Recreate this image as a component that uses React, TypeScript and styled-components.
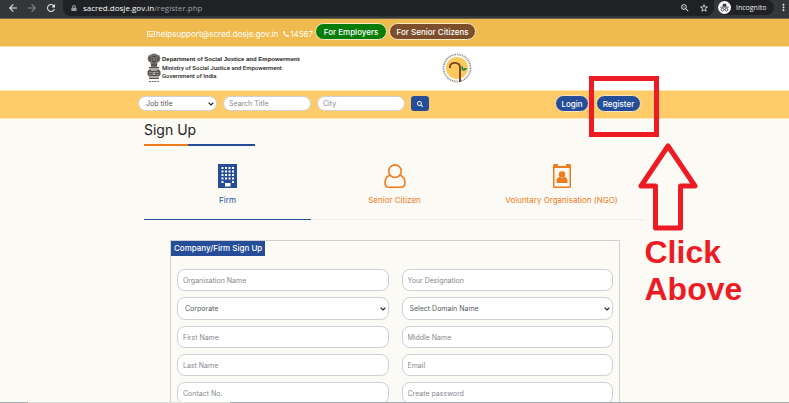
import React from "react";
import styled, { createGlobalStyle } from "styled-components";
import { FaPhoneAlt, FaRegEnvelope, FaSearch, FaLock } from "react-icons/fa";
import { MdArrowBack, MdArrowForward, MdRefresh, MdStarBorder, MdZoomOut, MdMoreVert } from "react-icons/md";

const uiFont = `Inter, "Open Sans", sans-serif`;
const blue = "#264d98";
const orange = "#ee7b1c";
const red = "#ed1c24";

const GlobalStyle = createGlobalStyle`
  *, *::before, *::after { box-sizing: border-box; }
  body { margin: 0; background: #fcfaf5; font-family: ${uiFont}; overflow: hidden; }
  button, input, select { font: inherit; }
  h1, h2, p, fieldset, legend { margin: 0; padding: 0; }
`;

const Screen = styled.div`
  position: relative;
  display: flex;
  flex-direction: column;
  height: 100vh;
  overflow: hidden;
`;

/* Browser chrome */

const BrowserBar = styled.header`
  flex: none;
  display: flex;
  align-items: center;
  gap: 4px;
  height: 19px;
  padding: 0 0 3px 7px;
  background: #35363a;
  border-bottom: 1px solid #6d6550;
  color: #9aa0a6;
  font-family: "Open Sans", sans-serif;
  font-size: 8px;
`;

const IconButton = styled.button<{ $color?: string }>`
  display: flex;
  padding: 0;
  border: 0;
  background: none;
  color: ${(p) => p.$color ?? "#e8eaed"};
`;

const History = styled.nav`
  display: flex;
  gap: 7px;
  width: 52px;
`;

const AddressBar = styled.div`
  flex: 1;
  display: flex;
  align-items: center;
  gap: 6px;
  height: 16px;
  padding: 0 5px 0 8px;
  border-radius: 0 0 8px 8px;
  background: #202124;
`;

const Tools = styled.div`
  display: flex;
  gap: 9px;
`;

const Url = styled.span`
  flex: 1;
  b { font-weight: 400; color: #fff; }
`;

const Incognito = styled.div`
  display: flex;
  align-items: center;
  gap: 5px;
  width: 56px;
  height: 15px;
  border-radius: 8px;
  background: #202124;
  color: #e8eaed;
  font-size: 7px;
`;

/* Site header */

const Band = styled.div<{ $tone: string; $height: number; $edge?: string }>`
  flex: none;
  height: ${(p) => p.$height}px;
  background: ${(p) => p.$tone};
  border-bottom: 1px solid ${(p) => p.$edge ?? p.$tone};
`;

const Container = styled.div`
  width: 100%;
  max-width: 501px;
  margin: 0 auto;
`;

const ContactRow = styled(Container)`
  display: flex;
  align-items: center;
  height: 100%;
  gap: 2px;
  padding: 0 3px 2px;
`;

const ContactLink = styled.a<{ $spaced?: boolean }>`
  display: flex;
  align-items: center;
  gap: 1px;
  margin: 4px ${(p) => (p.$spaced ? 3 : 0)}px 0 0;
  color: #fff;
  font-size: 8px;
  font-weight: 400;
  text-decoration: none;
  white-space: nowrap;
`;

const Pill = styled.a<{ $tone: string; $width: number }>`
  display: flex;
  align-items: center;
  justify-content: center;
  width: ${(p) => p.$width}px;
  height: 17px;
  border: 1px solid #fbe7bd;
  border-radius: 9px;
  background: ${(p) => p.$tone};
  color: #fff;
  font-size: 8px;
  font-weight: 500;
  text-decoration: none;
  white-space: nowrap;
`;

const BrandRow = styled(Container)`
  display: grid;
  grid-template-columns: 14px 279px auto 1fr;
  align-items: center;
  gap: 1px;
  height: 100%;
  padding: 0 3px 2px;
`;

const Department = styled.div`
  color: #222;
  font-family: Roboto, sans-serif;
  font-size: 6px;
  font-weight: 500;
  line-height: 8px;
  h2 {
    font-family: "Liberation Sans", Arial, sans-serif;
    font-size: 6px;
    line-height: 9px;
  }
`;

const SearchRow = styled(Container)`
  display: flex;
  align-items: center;
  height: 100%;
  padding: 0 4px 2px 0;
`;

const SearchForm = styled.form`
  flex: 1;
  display: flex;
  align-items: center;
  gap: 6px;
  margin-left: -6px;
`;

const Field = styled.input<{ $compact?: boolean }>`
  width: ${(p) => (p.$compact ? "88px" : "100%")};
  height: ${(p) => (p.$compact ? 15 : 22)}px;
  padding: 0 5px;
  border: 1px solid #ced0d2;
  border-radius: 8px;
  background: #fff;
  color: #495057;
  font-size: 7px;
  outline: 0;
  &::placeholder { color: #85898e; opacity: 1; }
`;

const SelectBox = styled.div<{ $compact?: boolean }>`
  display: grid;
  align-items: center;
  width: ${(p) => (p.$compact ? "79px" : "100%")};
  > * { grid-area: 1 / 1; }
  svg { justify-self: end; margin-right: 3px; pointer-events: none; }
`;

const Select = styled.select<{ $compact?: boolean }>`
  appearance: none;
  width: 100%;
  height: ${(p) => (p.$compact ? 15 : 23)}px;
  padding: 0 7px;
  border: 1px solid #ced0d2;
  border-radius: 8px;
  background: #fff;
  color: #555a60;
  font-size: 7px;
`;

const SearchButton = styled.button`
  display: flex;
  align-items: center;
  justify-content: center;
  width: 18px;
  height: 15px;
  padding: 0;
  border: 0;
  border-radius: 3px;
  background: ${blue};
  color: #fff;
`;

const Account = styled.nav`
  display: flex;
  gap: 7px;
`;

/* Sign-up content */

const Main = styled.main`
  flex: 1;
  min-height: 0;
  overflow: hidden;
`;

const Title = styled.h1`
  width: 111px;
  height: 27px;
  padding-top: 2px;
  border-bottom: 2px solid;
  border-image: linear-gradient(to right, ${orange} 40%, ${blue} 40%) 1;
  color: #222;
  font-size: 14px;
  font-weight: 400;
  line-height: 18px;
`;

const Tabs = styled.div`
  display: grid;
  grid-template-columns: repeat(3, 1fr);
`;

const Tab = styled.button<{ $active?: boolean }>`
  display: flex;
  flex-direction: column;
  align-items: center;
  gap: 5px;
  height: 74px;
  padding: 18px 0 0;
  border: 0;
  border-bottom: 1px solid ${(p) => (p.$active ? blue : "#eeeeec")};
  background: none;
  color: ${(p) => (p.$active ? blue : orange)};
  font-size: 8px;
  line-height: 14px;
`;

const Panel = styled.fieldset`
  min-width: 0;
  margin: 20px 25px 0 26px;
  border: 1px solid #d0d0d0;
`;

const PanelTitle = styled.legend`
  float: left;
  height: 15px;
  padding: 0 3px;
  background: ${blue};
  color: #fff;
  font-size: 8px;
  font-weight: 500;
  line-height: 15px;
`;

const Fields = styled.div`
  clear: both;
  display: grid;
  grid-template-columns: 1fr 1fr;
  gap: 6px 13px;
  padding: 13px 6px;
`;

const ScreenEdge = styled.div`
  flex: none;
  height: 1px;
  background: linear-gradient(to right, #a7aeb2 28px, #dcdcd8 28px 230px, #a9adb0 230px);
`;

/* Annotations laid over the page */

const Highlight = styled.div`
  position: absolute;
  top: 76px;
  left: calc(50% + 194px);
  width: 70px;
  height: 61px;
  border: 5px solid ${red};
`;

const Callout = styled.div`
  position: absolute;
  top: 142px;
  left: calc(50% + 243px);
  color: ${red};
  font: 700 32px/37px "Liberation Sans", Arial, sans-serif;
  svg { display: block; }
  p { margin: 3px 0 0 7px; }
`;

const Chevron = () => (
  <svg width="6" height="4" viewBox="0 0 6 4" aria-hidden="true">
    <path d="M0.6 0.6 3 3 5.4 0.6" fill="none" stroke="#222" strokeWidth="1.2" />
  </svg>
);

const IncognitoIcon = () => (
  <svg width="13" height="13" viewBox="0 0 13 13" aria-hidden="true">
    <circle cx="6.5" cy="6.5" r="6.5" fill="#fff" />
    <path d="M4.4 5.4 5 2.8h3l.6 2.6zM2.2 5.7h8.6v.8H2.2z" fill="#35363a" />
    <g fill="none" stroke="#35363a" strokeWidth=".8">
      <circle cx="4.5" cy="8.6" r="1.4" />
      <circle cx="8.5" cy="8.6" r="1.4" />
      <path d="M5.9 8.4h1.2" />
    </g>
  </svg>
);

const Emblem = () => (
  <svg width="14" height="30" viewBox="0 0 14 30" role="img" aria-label="Emblem of India">
    <path d="M4 1.500Q7-.5 10 1.500l2.500 1 1 3-1 3-2 1L10 14H4L3.500 9.500 1.500 8.500.5 5.500 1.500 2.500z" fill="#77736e" />
    <path d="M4.500 3.500 5.500 3 7 4l1.500-1 1 .5M5 6h1m2 0h1M5 8l2 1 2-1M3 4v4m8-4v4M5 11v2m2-3v3m2-2v2" fill="none" stroke="#292724" strokeWidth=".8" />
    <path d="M2 14h10v1.500H2zM2 16.500h10l1.500 2v3l-1.500 2H2l-1.500-2v-3zM2 24.500h10V26H2z" fill="#5b5753" />
    <path d="M4 17.500h6M2.500 19.500h2.500m4 0h2.500M2.500 21.500h2m5 0h2" stroke="#bbb5ae" strokeWidth=".8" />
    <circle cx="7" cy="20.500" r="2.200" fill="#d5d2ce" stroke="#292724" strokeWidth=".7" />
    <path d="M7 18.500v4m-2-2h4" stroke="#555" strokeWidth=".5" />
    <path d="M2 28.500h10" stroke="#666" strokeWidth="1" strokeDasharray="2 .6" />
  </svg>
);

const SacredLogo = () => (
  <svg width="30" height="30" viewBox="0 0 30 30" role="img" aria-label="SACRED">
    <circle cx="15" cy="15" r="13.500" fill="none" stroke="#8d8982" strokeWidth="1.700" strokeDasharray="1 .8" />
    <circle cx="15" cy="15" r="11" fill="#fdc95f" />
    <path d="M8 15v-1.500c0-5 10-5 10 1V29" fill="none" stroke="#744522" strokeWidth="1.900" />
    <path d="M20 16.500q-1.500-2.500.5-3.500 1.500 1.500-.5 3.500zm0 .5q.5-2.500 5-2-1.500 4-5 2z" fill="#178443" />
    <path d="M18 17.500q1.500 0 2.500-1.500" fill="none" stroke="#178443" strokeWidth=".7" />
  </svg>
);

const FirmIcon = () => (
  <svg width="19" height="24" viewBox="0 0 19 24" aria-hidden="true">
    <path d="M0 0h19v24H0z" fill="currentColor" />
    <path d="M3.500 4h13M3.500 7.500h13M3.500 11h13M3.500 14.500h13" stroke="#fff" strokeWidth="2" strokeDasharray="2 1.500" />
    <path d="M3.500 17h2v2h-2zm10.500 0h2v2h-2zM7 19h5.500v3.500H7z" fill="#fff" />
  </svg>
);

const CitizenIcon = () => (
  <svg width="22" height="24" viewBox="0 0 22 24" fill="none" stroke="currentColor" strokeWidth="1.600" aria-hidden="true">
    <circle cx="11" cy="7.200" r="6.300" />
    <path d="M5.800 11.300C2.500 12.500 1 15.500 1 19c0 2.700 1.500 4.200 4 4.200h12c2.500 0 4-1.500 4-4.200 0-3.500-1.500-6.500-4.800-7.700" />
  </svg>
);

const BadgeIcon = () => (
  <svg width="18" height="24" viewBox="0 0 18 24" aria-hidden="true">
    <path d="M1.500 0H5v2h8V0h3.500Q18 0 18 1.500v21q0 1.500-1.500 1.500h-15Q0 24 0 22.500v-21Q0 0 1.500 0z" fill="currentColor" />
    <path d="M1.500 4h15v18.500h-15z" fill="#fdfaf5" />
    <circle cx="9" cy="10.500" r="3.300" fill="currentColor" />
    <path d="M3.500 19v-2.500q0-2.500 3-3.500 2.500 1.700 5 0 3 1 3 3.500V19z" fill="currentColor" />
  </svg>
);

const rows: { label: string; select?: boolean }[] = [
  { label: "Organisation Name" },
  { label: "Your Designation" },
  { label: "Corporate", select: true },
  { label: "Select Domain Name", select: true },
  { label: "First Name" },
  { label: "Middle Name" },
  { label: "Last Name" },
  { label: "Email" },
  { label: "Contact No." },
  { label: "Create password" },
];

function Dropdown({ label, compact }: { label: string; compact?: boolean }) {
  return (
    <SelectBox $compact={compact}>
      <Select $compact={compact} aria-label={label}>
        <option>{label}</option>
      </Select>
      <Chevron />
    </SelectBox>
  );
}

export default function App() {
  return (
    <>
      <GlobalStyle />
      <Screen>
        <BrowserBar>
          <History>
            <IconButton aria-label="Back"><MdArrowBack size={12} /></IconButton>
            <IconButton aria-label="Forward" $color="#85878a"><MdArrowForward size={12} /></IconButton>
            <IconButton aria-label="Reload"><MdRefresh size={12} /></IconButton>
          </History>
          <AddressBar>
            <FaLock size={6} />
            <Url><b>sacred.dosje.gov.in</b>/register.php</Url>
            <Tools>
              <IconButton aria-label="Zoom"><MdZoomOut size={10} /></IconButton>
              <IconButton aria-label="Bookmark"><MdStarBorder size={10} /></IconButton>
            </Tools>
          </AddressBar>
          <Incognito><IncognitoIcon />Incognito</Incognito>
          <IconButton aria-label="Menu"><MdMoreVert size={11} /></IconButton>
        </BrowserBar>

        <Band $tone="#efbb4e" $height={28} $edge="#f7dda6">
          <ContactRow>
            <ContactLink href="mailto:helpsupport@scred.dosje.gov.in" $spaced>
              <FaRegEnvelope size={8} />helpsupport@scred.dosje.gov.in
            </ContactLink>
            <ContactLink href="tel:14567"><FaPhoneAlt size={6} />14567</ContactLink>
            <Pill href="#employers" $tone="#087c08" $width={72}>For Employers</Pill>
            <Pill href="#citizens" $tone="#7c4e2b" $width={87}>For Senior Citizens</Pill>
          </ContactRow>
        </Band>

        <Band $tone="#ffffff" $height={44} $edge="#fde5b4">
          <BrandRow>
            <Emblem />
            <Department>
              <h2>Department of Social Justice and Empowerment</h2>
              <p>Ministry of Social Justice and Empowerment</p>
              <p>Government of India</p>
            </Department>
            <SacredLogo />
          </BrandRow>
        </Band>

        <Band $tone="#fdcb67" $height={28} $edge="#fce5b5">
          <SearchRow>
            <SearchForm>
              <Dropdown label="Job title" compact />
              <Field $compact placeholder="Search Title" aria-label="Search Title" />
              <Field $compact placeholder="City" aria-label="City" />
              <SearchButton type="button" aria-label="Search"><FaSearch size={6} /></SearchButton>
            </SearchForm>
            <Account>
              <Pill href="#login" $tone={blue} $width={34}>Login</Pill>
              <Pill href="#register" $tone={blue} $width={45}>Register</Pill>
            </Account>
          </SearchRow>
        </Band>

        <Main>
          <Container>
            <Title>Sign Up</Title>
            <Tabs role="tablist">
              <Tab role="tab" aria-selected="true" $active><FirmIcon />Firm</Tab>
              <Tab role="tab" aria-selected="false"><CitizenIcon />Senior Citizen</Tab>
              <Tab role="tab" aria-selected="false"><BadgeIcon />Voluntary Organisation (NGO)</Tab>
            </Tabs>
            <Panel>
              <PanelTitle>Company/Firm Sign Up</PanelTitle>
              <Fields>
                {rows.map((row) =>
                  row.select ? (
                    <Dropdown key={row.label} label={row.label} />
                  ) : (
                    <Field key={row.label} placeholder={row.label} aria-label={row.label} />
                  ),
                )}
              </Fields>
            </Panel>
          </Container>
        </Main>
        <ScreenEdge />

        <Highlight />
        <Callout>
          <svg width="60" height="89" viewBox="0 0 60 89" aria-hidden="true">
            <path d="M30 4 57 44H42.500v42H17.500V44H3z" fill="none" stroke={red} strokeWidth="5" strokeLinejoin="round" />
          </svg>
          <p>Click<br />Above</p>
        </Callout>
      </Screen>
    </>
  );
}
